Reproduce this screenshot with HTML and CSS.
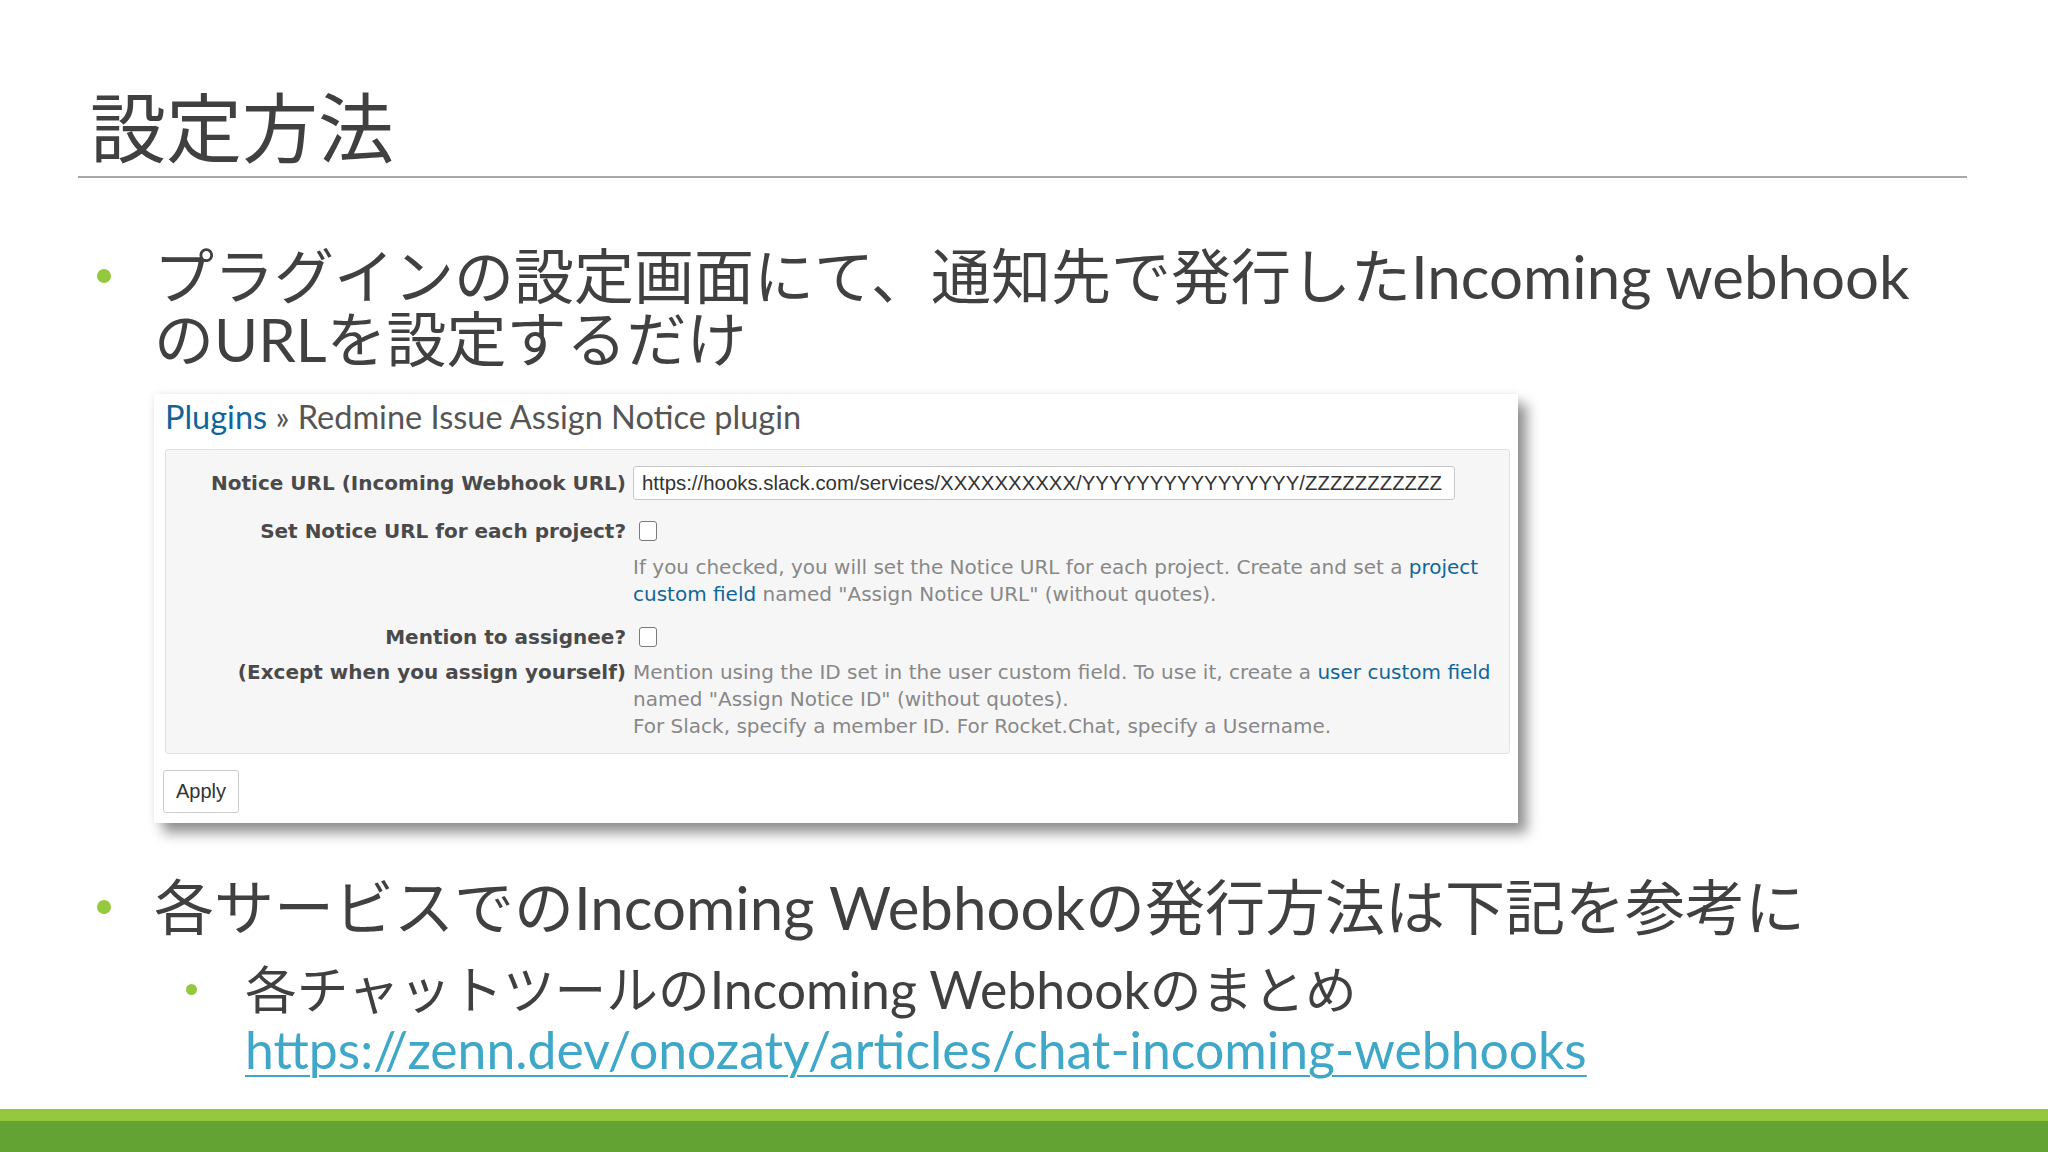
FILE: index.html
```html
<!DOCTYPE html>
<html lang="ja">
<head>
<meta charset="utf-8">
<title>設定方法</title>
<link rel="stylesheet" href="styles.css">
</head>
<body>
<div class="slide">
  <h1 class="title">設定方法</h1>
  <div class="rule"></div>
  <ul class="bullets">
    <li class="item">
      <span class="dot"></span>
      <div class="item-body">
        <p class="line">プラグインの設定画面にて、通知先で発行したIncoming webhook<br>のURLを設定するだけ</p>
        <div class="shot">
          <h2 class="rm-title"><span class="rm-link">Plugins</span> » Redmine Issue Assign Notice plugin</h2>
          <div class="rm-box">
            <div class="rm-row rm-row-input">
              <span class="rm-label">Notice URL (Incoming Webhook URL)</span>
              <span class="rm-input">https://hooks.slack.com/services/XXXXXXXXXX/YYYYYYYYYYYYYYYY/ZZZZZZZZZZZ</span>
            </div>
            <div class="rm-row rm-row-check">
              <span class="rm-label">Set Notice URL for each project?</span>
              <span class="rm-checkbox"></span>
            </div>
            <div class="rm-row rm-row-help">
              <span class="rm-label"></span>
              <p class="rm-help">If you checked, you will set the Notice URL for each project. Create and set a <span class="rm-link">project custom field</span> named "Assign Notice URL" (without quotes).</p>
            </div>
            <div class="rm-row rm-row-check2">
              <span class="rm-label">Mention to assignee?</span>
              <span class="rm-checkbox"></span>
            </div>
            <div class="rm-row rm-row-help2">
              <span class="rm-label">(Except when you assign yourself)</span>
              <p class="rm-help">Mention using the ID set in the user custom field. To use it, create a <span class="rm-link">user custom field</span> named "Assign Notice ID" (without quotes).<br>For Slack, specify a member ID. For Rocket.Chat, specify a Username.</p>
            </div>
          </div>
          <div class="rm-actions"><span class="rm-button">Apply</span></div>
        </div>
      </div>
    </li>
    <li class="item item-2">
      <span class="dot"></span>
      <div class="item-body">
        <p class="line">各サービスでのIncoming Webhookの発行方法は下記を参考に</p>
        <ul class="sub">
          <li class="sub-item">
            <span class="sub-dot"></span>
            <p class="sub-line">各チャットツールのIncoming Webhookのまとめ<br><span class="url">https://zenn.dev/onozaty/articles/chat-incoming-webhooks</span></p>
          </li>
        </ul>
      </div>
    </li>
  </ul>
  <div class="spacer"></div>
  <div class="band-light"></div>
  <div class="band-dark"></div>
</div>
</body>
</html>
```
FILE: styles.css
```css
html, body {
  margin: 0;
  padding: 0;
  background: #ffffff;
}
.slide {
  width: 2048px;
  height: 1152px;
  overflow: hidden;
  display: flex;
  flex-direction: column;
  background: #ffffff;
  font-family: "Lato", "Noto Sans CJK JP", sans-serif;
  color: #404040;
}
.title {
  margin: 79px 0 0 90px;
  font-family: "Noto Sans CJK JP", sans-serif;
  font-weight: 400;
  font-size: 76px;
  line-height: 90px;
  color: #404040;
}
.rule {
  margin: 7px 0 0 78px;
  width: 1889px;
  height: 2px;
  background: #a8a8a8;
}
.bullets {
  list-style: none;
  margin: 67px 0 0 0;
  padding: 0;
}
.item {
  display: flex;
  align-items: flex-start;
}
.item-2 {
  margin-top: 53px;
}
.dot {
  flex: none;
  width: 14px;
  height: 14px;
  border-radius: 50%;
  background: #94c83e;
  margin: 24px 43px 0 97px;
}
.item-body {
  flex: 1;
}
.line {
  margin: 0;
  font-size: 60px;
  line-height: 63px;
  color: #404040;
}
.shot {
  margin-top: 23px;
  width: 1364px;
  height: 429px;
  box-sizing: border-box;
  background: #ffffff;
  box-shadow: 9px 10px 12px rgba(0, 0, 0, 0.42), 0 0 8px rgba(0, 0, 0, 0.08);
  padding: 0 8px 0 11px;
  display: flex;
  flex-direction: column;
  font-family: "DejaVu Sans", sans-serif;
}
.rm-title {
  margin: 0;
  height: 55px;
  font-family: "Lato", sans-serif;
  font-weight: 400;
  font-size: 32.5px;
  line-height: 46px;
  color: #555555;
}
.rm-link {
  color: #116699;
}
.rm-box {
  background: #f6f6f7;
  border: 1px solid #e2e2e2;
  border-radius: 3px;
  padding: 16px 0 13px 0;
}
.rm-row {
  display: grid;
  grid-template-columns: 460px 1fr;
  column-gap: 7px;
  align-items: center;
}
.rm-label {
  text-align: right;
  font-weight: bold;
  font-size: 20px;
  color: #4a4a4a;
  white-space: nowrap;
}
.rm-input {
  width: 822px;
  height: 34px;
  box-sizing: border-box;
  border: 1px solid #c8c8c8;
  border-radius: 3px;
  background: #ffffff;
  padding: 0 8px;
  font-family: "Liberation Sans", sans-serif;
  font-size: 20.4px;
  line-height: 32px;
  color: #333333;
  white-space: nowrap;
  overflow: hidden;
}
.rm-row-check {
  margin-top: 17px;
  height: 28px;
}
.rm-row-check2 {
  margin-top: 14px;
  height: 28px;
}
.rm-checkbox {
  width: 16px;
  height: 18px;
  border: 1.5px solid #7a7a7a;
  border-radius: 3px;
  background: #ffffff;
  margin-left: 6px;
}
.rm-row-help {
  margin-top: 9px;
  align-items: start;
}
.rm-row-help2 {
  margin-top: 8px;
  align-items: start;
}
.rm-row-help2 .rm-label {
  line-height: 27px;
}
.rm-help {
  margin: 0;
  font-size: 20px;
  line-height: 27.3px;
  color: #888888;
  max-width: 870px;
}
.rm-actions {
  margin-top: 16px;
  display: flex;
}
.rm-button {
  display: inline-block;
  margin-left: -2px;
  width: 76px;
  height: 43px;
  box-sizing: border-box;
  border: 1px solid #cccccc;
  border-radius: 3px;
  background: #ffffff;
  font-family: "Liberation Sans", sans-serif;
  font-size: 20px;
  line-height: 41px;
  text-align: center;
  color: #333333;
}
.sub {
  list-style: none;
  margin: 20px 0 0 -154px;
  padding: 0;
}
.sub-item {
  display: flex;
  align-items: flex-start;
}
.sub-dot {
  flex: none;
  width: 11px;
  height: 11px;
  border-radius: 50%;
  background: #94c83e;
  margin: 25px 48px 0 186px;
}
.sub-line {
  margin: 0;
  font-size: 51.7px;
  line-height: 60px;
  color: #404040;
}
.url {
  color: #3fa7c8;
  text-decoration: underline;
  text-decoration-thickness: 2px;
  text-underline-offset: 6px;
}
.spacer {
  flex: 1;
}
.band-light {
  height: 12px;
  background: #94c83e;
  flex: none;
}
.band-dark {
  height: 31px;
  background: #62a333;
  flex: none;
}
```
